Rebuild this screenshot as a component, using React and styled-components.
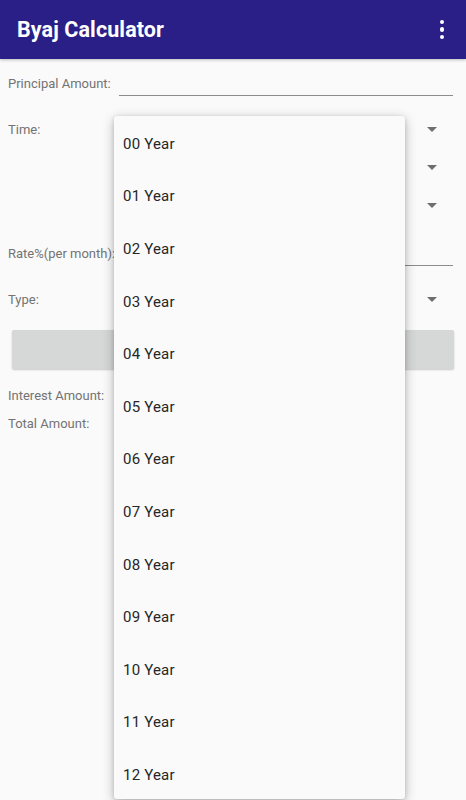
import React from 'react';
import styled, { createGlobalStyle } from 'styled-components';

const GlobalStyle = createGlobalStyle`
  html, body {
    margin: 0;
    padding: 0;
    background: #fafafa;
    font-family: Roboto, "Noto Sans", sans-serif;
  }
`;

const Screen = styled.div`
  position: relative;
  width: 466px;
  height: 800px;
  overflow: hidden;
  background: #fafafa;
`;

const AppBar = styled.div`
  height: 59px;
  background: #291f86;
  display: flex;
  align-items: center;
  justify-content: space-between;
  padding: 0 14px 0 17px;
  box-sizing: border-box;
  box-shadow: 0 1px 3px rgba(0, 0, 0, 0.25);
`;

const Title = styled.div`
  color: #ffffff;
  font-size: 21.5px;
  font-weight: 700;
  letter-spacing: 0.1px;
`;

const Kebab = styled.div`
  display: flex;
  flex-direction: column;
  gap: 3px;
  padding: 4px 8px;
  span {
    width: 4.5px;
    height: 4.5px;
    border-radius: 50%;
    background: #fff;
  }
`;

const Form = styled.div`
  padding: 0 8px;
  display: flex;
  flex-direction: column;
`;

const Row = styled.div`
  display: flex;
  align-items: ${p => p.top ? 'flex-start' : 'center'};
  height: ${p => p.h}px;
  margin-top: ${p => p.mt || 0}px;
`;

const Label = styled.div`
  font-size: 13px;
  color: #737373;
  white-space: nowrap;
  line-height: ${p => p.lh ? p.lh + 'px' : 'normal'};
`;

const Input = styled.div`
  flex: 1;
  height: 24px;
  margin: 0 5px 0 ${p => p.ml || 8}px;
  border-bottom: 1px solid #8c8c8c;
`;

const SpinnerCol = styled.div`
  flex: 1;
  display: flex;
  flex-direction: column;
  margin-left: ${p => p.ml || 0}px;
`;

const Spinner = styled.div`
  height: 38px;
  display: flex;
  align-items: center;
  justify-content: flex-end;
  padding-right: 21px;
`;

const Arrow = styled.div`
  width: 0;
  height: 0;
  border-left: 5.5px solid transparent;
  border-right: 5.5px solid transparent;
  border-top: 5.5px solid #6e6e6e;
`;

const Button = styled.div`
  height: 39px;
  margin: 9px 4px 0;
  background: #d6d7d7;
  border-radius: 2px;
  box-shadow: 0 1px 2px rgba(0, 0, 0, 0.2);
`;

const ResultLabel = styled(Label)`
  height: 28px;
  line-height: 28px;
`;

const Dropdown = styled.div`
  position: absolute;
  left: 114px;
  top: 116px;
  width: 291px;
  height: 683px;
  padding-top: 1.5px;
  box-sizing: border-box;
  background: #fafafa;
  border-radius: 3px;
  box-shadow: 0 3px 12px rgba(0, 0, 0, 0.28), 0 1px 4px rgba(0, 0, 0, 0.12);
`;

const Item = styled.div`
  height: 52.6px;
  display: flex;
  align-items: center;
  padding-left: 9px;
  font-size: 15px;
  font-weight: 400;
  color: #262626;
  letter-spacing: 0.2px;
`;

const years = Array.from({ length: 13 }, (_, i) => String(i).padStart(2, '0') + ' Year');

export default function App() {
  return (
    <Screen>
      <GlobalStyle />
      <AppBar>
        <Title>Byaj Calculator</Title>
        <Kebab><span /><span /><span /></Kebab>
      </AppBar>
      <Form>
        <Row h={48}>
          <Label>Principal Amount:</Label>
          <Input />
        </Row>
        <Row h={114} mt={3} top>
          <Label lh={40}>Time:</Label>
          <SpinnerCol ml={80}>
            <Spinner><Arrow /></Spinner>
            <Spinner><Arrow /></Spinner>
            <Spinner><Arrow /></Spinner>
          </SpinnerCol>
        </Row>
        <Row h={48} mt={5}>
          <Label>Rate%(per month):</Label>
          <Input ml={3} />
        </Row>
        <Row h={44}>
          <Label>Type:</Label>
          <SpinnerCol ml={80}>
            <Spinner><Arrow /></Spinner>
          </SpinnerCol>
        </Row>
        <Button />
        <ResultLabel style={{ marginTop: 13 }}>Interest Amount:</ResultLabel>
        <ResultLabel>Total Amount:</ResultLabel>
      </Form>
      <Dropdown>
        {years.map(y => <Item key={y}>{y}</Item>)}
      </Dropdown>
    </Screen>
  );
}
